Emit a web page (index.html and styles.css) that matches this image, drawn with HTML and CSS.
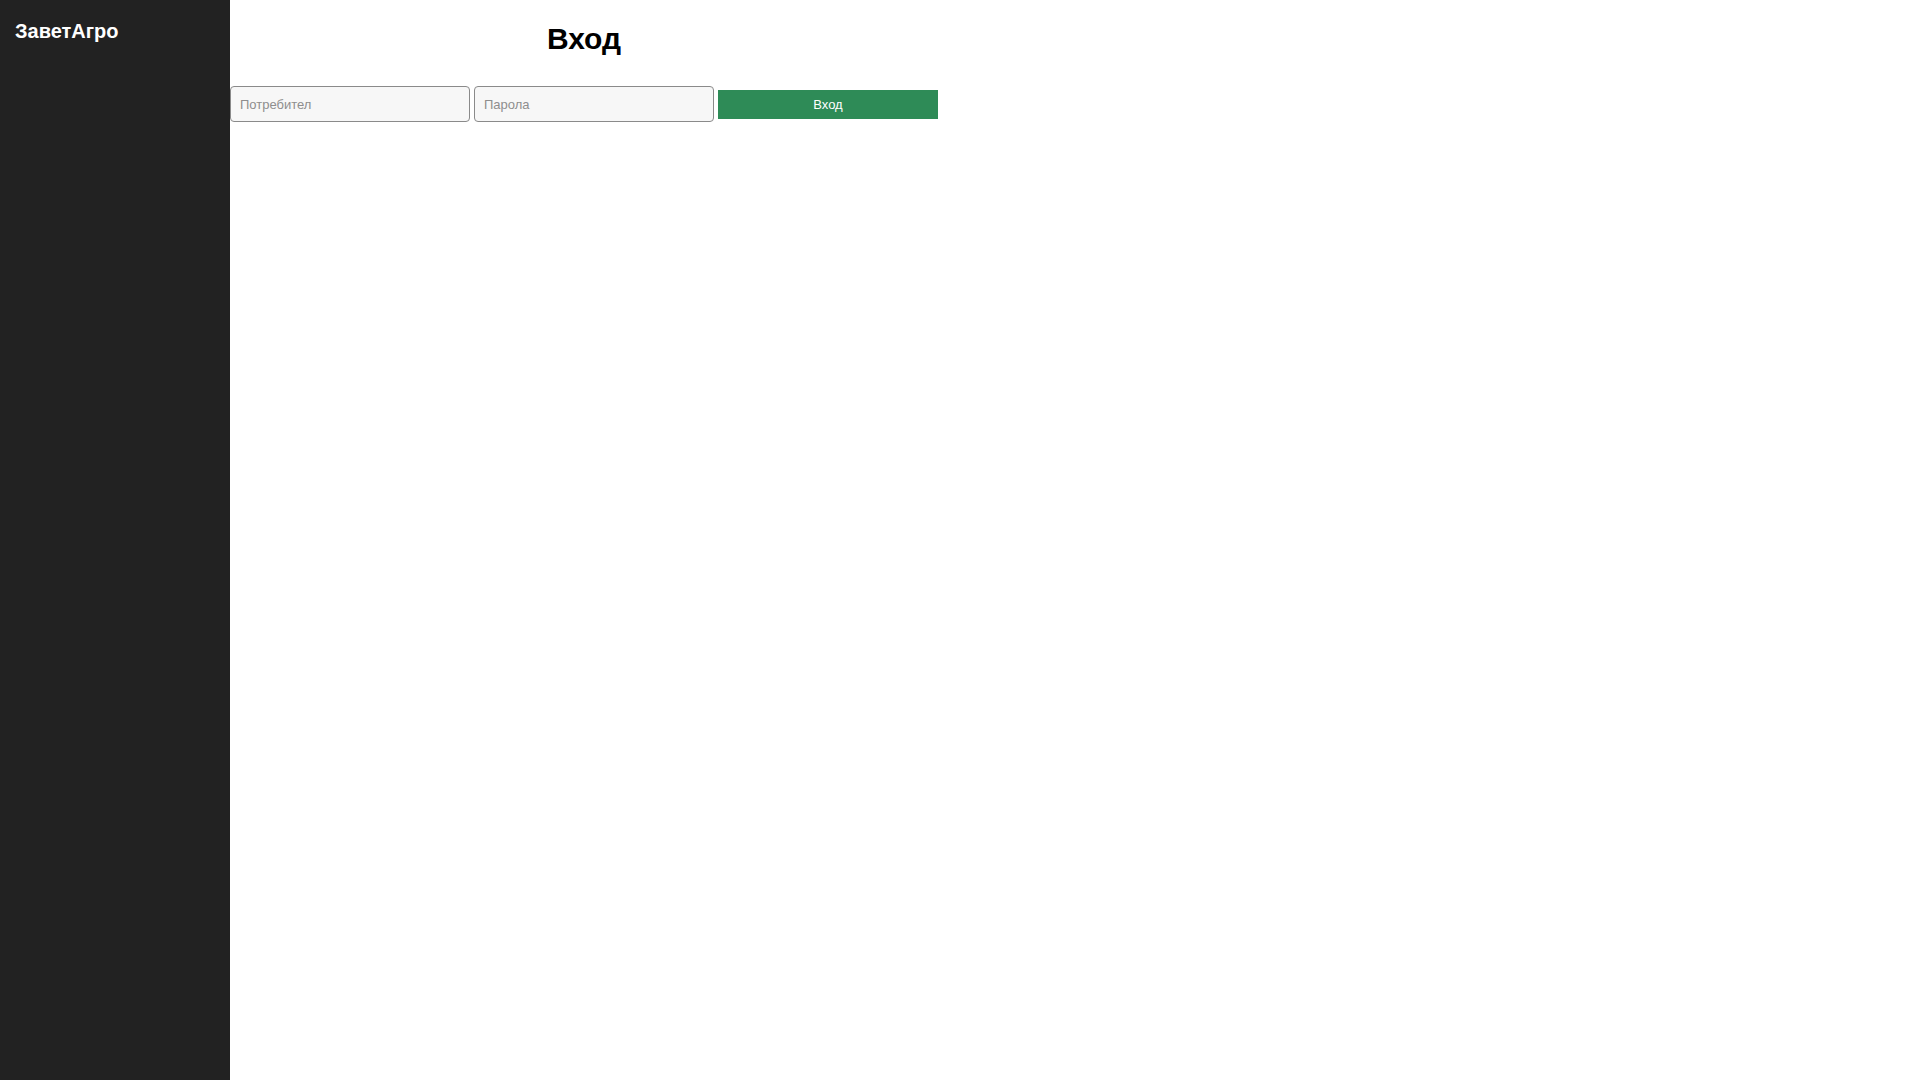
FILE: index.html
```html
<!DOCTYPE html>
<html lang="bg">
<head>
<meta charset="utf-8">
<title>ЗаветАгро</title>
<link rel="stylesheet" href="styles.css">
</head>
<body>
<div class="layout">
  <aside class="sidebar">
    <div class="brand">ЗаветАгро</div>
  </aside>
  <main class="main">
    <div class="login">
      <h1 class="title">Вход</h1>
      <form class="login-form">
        <input class="field" type="text" placeholder="Потребител">
        <input class="field" type="password" placeholder="Парола">
        <button class="submit" type="button">Вход</button>
      </form>
    </div>
  </main>
</div>
</body>
</html>
```
FILE: styles.css
```css
html, body {
  margin: 0;
  padding: 0;
  height: 100%;
}
body {
  font-family: "Liberation Sans", Arial, sans-serif;
  background: #ffffff;
  color: #000;
}
.layout {
  display: flex;
  min-height: 100vh;
}
.sidebar {
  width: 230px;
  flex: 0 0 230px;
  background: #222222;
  box-sizing: border-box;
  padding: 20px 15px;
}
.brand {
  color: #ffffff;
  font-weight: bold;
  font-size: 20px;
  line-height: 23px;
}
.main {
  flex: 1;
}
.login {
  width: 708px;
}
.title {
  margin: 21px 0 0;
  font-size: 30px;
  line-height: 35px;
  text-align: center;
  font-weight: bold;
}
.login-form {
  margin-top: 30px;
  display: flex;
  align-items: center;
  gap: 4px;
}
.field {
  box-sizing: border-box;
  width: 240px;
  height: 36px;
  padding: 0 9px;
  border: 1px solid #8a8a8a;
  border-radius: 4px;
  background: #f7f7f7;
  font-family: "Liberation Sans", Arial, sans-serif;
  font-size: 13px;
  color: #333;
  margin: 0;
}
.field::placeholder {
  color: #8e8e8e;
}
.submit {
  box-sizing: border-box;
  width: 220px;
  height: 29px;
  margin: 0;
  border: none;
  background: #2e8b57;
  color: #ffffff;
  font-family: "Liberation Sans", Arial, sans-serif;
  font-size: 13px;
}
```
